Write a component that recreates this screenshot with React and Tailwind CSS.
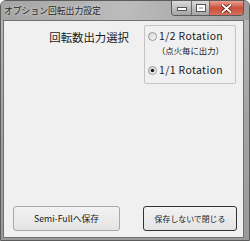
import React from "react";

function Radio({ checked }) {
  return (
    <svg width="9" height="9" viewBox="0 0 9 9" className="shrink-0">
      <defs>
        <linearGradient id={checked ? "rg1" : "rg0"} x1="0" y1="0" x2="1" y2="1">
          <stop offset="0" stopColor="#d4d4d4" />
          <stop offset="1" stopColor="#fafafa" />
        </linearGradient>
      </defs>
      <circle cx="4.5" cy="4.5" r="4" fill={`url(#${checked ? "rg1" : "rg0"})`} stroke="#8e8e8e" strokeWidth="0.9" />
      {checked && <circle cx="4.5" cy="4.5" r="1.8" fill="#1e1e1e" />}
    </svg>
  );
}

export default function App() {
  const font = { fontFamily: "'Noto Sans CJK JP', 'Noto Sans', sans-serif" };
  return (
    <div
      style={font}
      className="w-[250px] h-[241px] flex flex-col bg-gradient-to-b from-[#b9b9b9] via-[#a2a2a2] to-[#9a9a9a] border border-[#5c5c5c] rounded-t-[6px] overflow-hidden"
    >
      <div className="h-[19px] flex items-start shrink-0 bg-gradient-to-r from-[#a4a4a4] via-[#bcbcbc] to-[#9c9c9c]">
        <div className="pl-[3px] pt-[4px] text-[8.8px] leading-[12px] text-[#262626] whitespace-nowrap [text-shadow:0_0_3px_#e8e8e8]">
          オプション回転出力設定
        </div>
        <div className="ml-auto mr-[5px] flex h-[15px] rounded-b-[4px] border border-t-0 border-[#5a5a5a] overflow-hidden">
          <div className="w-[20px] h-full flex items-end justify-center pb-[4px] bg-gradient-to-b from-[#dadada] to-[#a4a4a4] border-r border-[#6a6a6a]">
            <div className="w-[8px] h-[2px] bg-white border border-[#555] box-content" />
          </div>
          <div className="w-[18px] h-full flex items-center justify-center bg-gradient-to-b from-[#dadada] to-[#a4a4a4] border-r border-[#6a6a6a]">
            <div className="w-[8px] h-[6px] border-2 border-white outline outline-1 outline-[#555]" />
          </div>
          <div className="w-[33px] h-full flex items-center justify-center bg-gradient-to-b from-[#e9a193] via-[#c9503c] to-[#d7705a]">
            <svg width="11" height="9" viewBox="0 0 11 9">
              <path d="M1.5 1 L9.5 8 M9.5 1 L1.5 8" stroke="#5a1a10" strokeWidth="3.4" strokeLinecap="square" />
              <path d="M1.5 1 L9.5 8 M9.5 1 L1.5 8" stroke="#ffffff" strokeWidth="1.9" strokeLinecap="square" />
            </svg>
          </div>
        </div>
      </div>
      <div className="flex-1 ml-[2px] mr-[5px] mb-[2px] border border-[#707070] bg-[#f0f0f0] flex flex-col">
        <div className="flex pt-[4px]">
          <div className="w-[125px] text-right pt-[5px] text-[11.4px] leading-[14px] text-[#1a1a1a] whitespace-nowrap">
            回転数出力選択
          </div>
          <div className="ml-[15px] w-[92px] h-[59px] border border-[#c4c4c4] rounded-[2px] pl-[3px] text-[#1a1a1a]">
            <div className="flex items-center h-[14px] mt-[3px]">
              <Radio checked={false} />
              <span className="ml-[2px] text-[10.4px] leading-[14px] tracking-[0.4px] whitespace-nowrap">1/2 Rotation</span>
            </div>
            <div className="h-[14px] pl-[9px] text-[8.4px] leading-[14px] whitespace-nowrap">（点火毎に出力）</div>
            <div className="flex items-center h-[14px] mt-[6px]">
              <Radio checked={true} />
              <span className="ml-[2px] text-[10.4px] leading-[14px] tracking-[0.4px] whitespace-nowrap">1/1 Rotation</span>
            </div>
          </div>
        </div>
        <div className="mt-auto flex pl-[9px] pb-[6px]">
          <div className="w-[107px] h-[25px] rounded-[3px] border border-[#a8a8a8] bg-gradient-to-b from-[#f2f2f2] to-[#e4e4e4] flex items-center justify-center text-[8.8px] text-[#1a1a1a] whitespace-nowrap">
            Semi-Fullへ保存
          </div>
          <div className="ml-[23px] w-[94px] h-[25px] rounded-[3px] border border-[#333] bg-gradient-to-b from-[#f2f2f2] to-[#e4e4e4] flex items-center justify-center text-[7.9px] text-[#1a1a1a] whitespace-nowrap">
            保存しないで閉じる
          </div>
        </div>
      </div>
    </div>
  );
}
